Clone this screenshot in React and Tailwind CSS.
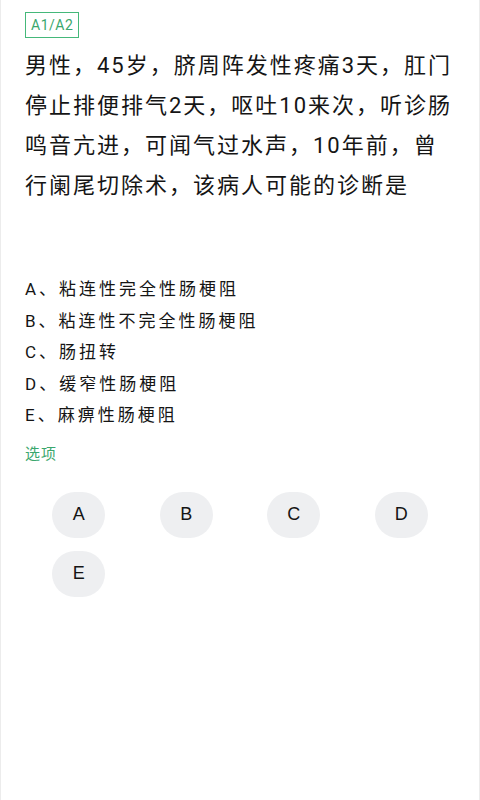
import React, { useState } from 'react';

const question =
  '男性，45岁，脐周阵发性疼痛3天，肛门停止排便排气2天，呕吐10来次，听诊肠鸣音亢进，可闻气过水声，10年前，曾行阑尾切除术，该病人可能的诊断是';

const options = [
  { key: 'A', text: '粘连性完全性肠梗阻' },
  { key: 'B', text: '粘连性不完全性肠梗阻' },
  { key: 'C', text: '肠扭转' },
  { key: 'D', text: '缓窄性肠梗阻' },
  { key: 'E', text: '麻痹性肠梗阻' },
];

const App = () => {
  const [picked, setPicked] = useState(null);

  return (
    <div
      className="min-h-[800px] w-full bg-white border-x border-[#ececec] px-6 pt-3 text-[#151515]"
      style={{ fontFamily: 'Roboto, "Noto Sans CJK SC", sans-serif' }}
    >
      {/* Type badge */}
      <div className="flex">
        <span className="h-[26px] px-[5px] flex items-center border-[1.5px] border-[#45b87a] text-[#3aa76d] text-[14px] tracking-[0.5px] leading-none">
          A1/A2
        </span>
      </div>

      {/* Question */}
      <p className="mt-[8px] text-[22px] leading-[40px] tracking-[2px]">{question}</p>

      {/* Options */}
      <div className="mt-[68px]">
        {options.map((o) => (
          <p key={o.key} className="text-[17px] leading-[31.5px] tracking-[3px]">
            {o.key}、{o.text}
          </p>
        ))}
      </div>

      <p className="mt-[12px] text-[15px] leading-[20px] tracking-[1px] text-[#3aa76d]">选项</p>

      {/* Answer buttons */}
      <div className="mt-[28px] grid grid-cols-4 gap-y-[13px]">
        {options.map((o) => (
          <div key={o.key} className="flex justify-center">
            <button
              onClick={() => setPicked(o.key)}
              className={`w-[53px] h-[46px] rounded-full flex items-center justify-center text-[18px] ${
                picked === o.key ? 'bg-[#3aa76d] text-white' : 'bg-[#eeeff1] text-[#151515]'
              }`}
              style={{ fontFamily: '"Liberation Sans", Arial, sans-serif' }}
            >
              {o.key}
            </button>
          </div>
        ))}
      </div>
    </div>
  );
};

export default App;
